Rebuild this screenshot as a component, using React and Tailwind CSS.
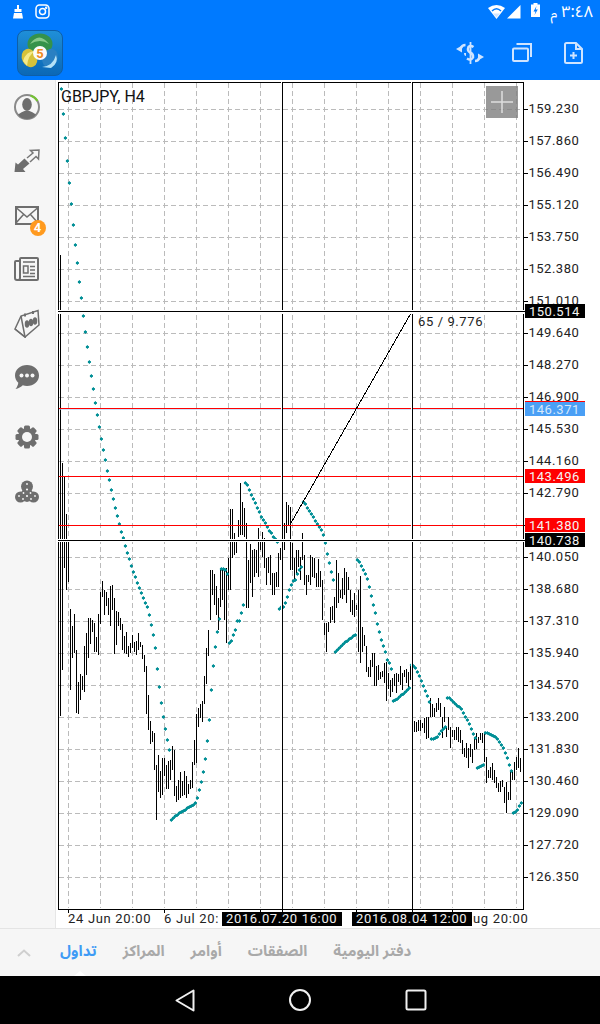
import React from 'react';

const ARABIC = "font-['Noto_Sans_Arabic','DejaVu_Sans',sans-serif]";

// [top, bottom] of each bar, first bar at x=60, one bar every 2px
const BARS = [
  [255,716],[463,670],[477,568],[514,590],[541,582],[609,690],[626,658],[614,653],[650,713],[682,714],
  [674,700],[676,690],[646,692],[633,675],[618,658],[618,644],[620,632],[623,652],[637,652],[614,655],
  [592,624],[581,597],[590,615],[592,606],[598,615],[586,626],[585,610],[598,654],[611,645],[612,626],
  [618,630],[624,650],[636,653],[632,654],[646,657],[643,653],[635,648],[642,652],[641,655],[633,650],
  [642,647],[645,659],[655,672],[666,714],[695,730],[721,744],[731,742],[733,770],[765,820],[755,792],
  [771,798],[758,795],[758,776],[765,789],[761,789],[760,780],[746,770],[750,796],[786,802],[780,800],
  [772,798],[781,796],[771,795],[776,798],[784,794],[780,789],[762,788],[740,765],[714,763],[708,727],
  [704,718],[701,722],[676,704],[648,684],[630,656],[570,620],[570,595],[574,605],[586,615],[598,630],
  [568,607],[568,600],[570,620],[568,643],[558,590],[509,590],[509,558],[533,555],[540,553],[520,537],
  [483,535],[502,535],[508,537],[523,608],[560,608],[544,583],[550,597],[549,577],[550,573],[528,577],
  [540,550],[532,557],[538,568],[558,585],[557,573],[555,585],[573,595],[573,595],[572,587],[553,587],
  [548,560],[538,550],[523,550],[502,533],[505,525],[507,570],[543,570],[558,582],[550,573],[550,567],
  [557,580],[533,560],[555,585],[575,595],[575,582],[555,585],[557,577],[558,578],[573,587],[559,587],
  [571,587],[580,620],[623,635],[623,652],[622,632],[607,623],[606,620],[597,623],[560,608],[573,603],
  [590,598],[578,599],[568,595],[572,603],[577,590],[590,612],[600,615],[593,617],[605,610],[590,652],
  [576,663],[627,652],[635,646],[646,672],[667,677],[660,677],[653,667],[653,686],[666,686],[665,680],
  [672,679],[671,677],[663,683],[662,701],[673,689],[680,697],[678,692],[674,686],[673,693],[674,682],
  [666,685],[673,690],[670,677],[669,683],[672,687],[665,680],[712,720],[721,732],[722,732],[720,731],
  [720,731],[723,728],[718,733],[717,739],[717,738],[698,717],[704,717],[708,717],[703,712],[698,710],
  [703,717],[717,738],[707,722],[727,737],[717,730],[727,748],[730,737],[730,740],[727,740],[727,742],
  [730,743],[740,754],[748,757],[743,758],[748,768],[744,757],[749,763],[737,750],[733,749],[737,743],
  [733,740],[733,743],[732,762],[757,783],[770,778],[767,778],[763,780],[770,783],[777,788],[783,792],
  [781,792],[780,787],[787,803],[782,813],[792,800],[770,800],[770,780],[762,780],[757,770],[748,768],
  [758,772],
];

// y of each indicator dot, first at x=61, one every 2px
const DOTS = [
  89,114,138,161,183,204,225,245,263,282,298,316,332,347,362,376,389,403,415,427,
  439,450,460,471,480,490,499,508,516,524,532,538,546,553,559,566,572,577,583,588,
  593,598,603,607,615,625,635,648,669,687,703,717,729,740,750,820,818,816,815,813,
  812,811,810,808,807,806,805,803,798,790,782,772,759,741,720,690,666,647,632,619,
  569,569,570,574,643,641,635,630,621,621,613,605,483,485,490,495,499,503,508,512,
  517,520,523,527,531,533,537,539,542,609,607,607,603,597,590,585,581,580,574,570,
  567,502,504,508,511,514,517,521,524,527,530,535,543,554,563,572,580,652,650,648,
  646,644,642,641,639,638,636,635,560,562,566,570,574,579,587,596,605,613,624,632,
  640,646,652,660,663,669,701,700,699,697,695,694,692,690,688,665,666,668,672,676,
  681,686,691,696,702,739,739,738,737,734,731,729,727,698,698,700,702,704,706,707,
  709,713,717,720,724,729,734,738,768,767,766,765,733,733,734,735,736,737,739,742,
  745,748,753,758,765,771,813,812,810,806,803,
];

const PRICES = ['159.230','157.860','156.490','155.120','153.750','152.380','151.010','149.640','148.270','146.900','145.530','144.160','142.790','141.420','140.050','138.680','137.310','135.940','134.570','133.200','131.830','130.460','129.090','127.720','126.350'];
const VLINES = Array.from({ length: 15 }, (_, i) => 68.5 + i * 32);
const HLINES = Array.from({ length: 26 }, (_, i) => 109.5 + i * 32);

const barsPath = BARS.map(([a, b], i) => `M${60.5 + i * 2} ${a}V${b}`).join('');
const dotsPath = DOTS.map((y, i) => {
  const x = 61.4 + i * 2;
  return `M${x - 1.5} ${y - 0.9}h3v1.8h-3zM${x - 0.6} ${y - 1.8}h1.2v3.6h-1.2z`;
}).join('');

const TAGS = [
  { y: 304, color: '#000000', text: '150.514' },
  { y: 402, color: '#4a9ff5', text: '146.371', fg: '#d8e9fb' },
  { y: 469, color: '#ff0000', text: '143.496' },
  { y: 518, color: '#ff0000', text: '141.380' },
  { y: 533, color: '#000000', text: '140.738' },
];

function Chart() {
  return (
    <svg width="544" height="848" viewBox="56 80 544 848" className="block" style={{ fontFamily: 'Roboto, sans-serif' }}>
      <rect x="56" y="80" width="544" height="848" fill="#fff" />
      <g stroke="#bbbbbb" strokeWidth="1" strokeDasharray="5 3" shapeRendering="crispEdges">
        {VLINES.map((x) => <path key={x} d={`M${x} 83V908`} />)}
        {HLINES.map((y) => <path key={y} d={`M59 ${y}H522`} />)}
      </g>
      <path d={barsPath} stroke="#000" strokeWidth="1" shapeRendering="crispEdges" fill="none" />
      <path d={dotsPath} fill="#008f96" />
      <rect x="58" y="82" width="465" height="827" fill="none" stroke="#000" strokeWidth="1" shapeRendering="crispEdges" transform="translate(0.5 0)" />
      <g fill="#ff0000">
        <rect x="59" y="408" width="464" height="1" />
        <rect x="59" y="476" width="464" height="1" />
        <rect x="59" y="525" width="464" height="1" />
        <rect x="525" y="401" width="60" height="1" />
      </g>
      <rect x="59" y="409" width="464" height="1" fill="#a9cdf5" opacity="0.6" />
      <path d="M291 523L411 313" stroke="#000" strokeWidth="1" fill="none" shapeRendering="crispEdges" />
      {/* crosshairs */}
      <rect x="281" y="82" width="1" height="827" fill="#fff" />
      <rect x="411" y="82" width="1" height="827" fill="#fff" />
      <rect x="282" y="82" width="1" height="830" fill="#000" />
      <rect x="412" y="82" width="1" height="830" fill="#000" />
      <rect x="58" y="310" width="467" height="4" fill="#fff" />
      <rect x="58" y="539" width="467" height="3" fill="#fff" />
      <rect x="58" y="311" width="467" height="1" fill="#000" />
      <rect x="58" y="540" width="467" height="1" fill="#000" />
      {/* axis ticks */}
      {PRICES.map((p, i) => <rect key={p} x="523" y={109 + i * 32} width="5" height="1" fill="#000" />)}
      {[68, 164, 260, 356, 452].map((x) => <rect key={x} x={x} y="909" width="1" height="4" fill="#000" />)}
      {PRICES.map((p, i) => (
        <text key={p} x="528.500" y={113 + i * 32} fontSize="13" fill="#222" letterSpacing="0.5">{p}</text>
      ))}
      {TAGS.map((t) => (
        <g key={t.text}>
          <rect x="525" y={t.y} width="60" height="14" fill={t.color} />
          <text x="529" y={t.y + 11.500} fontSize="13" fill={t.fg || '#f4f4f4'} letterSpacing="0.5">{t.text}</text>
        </g>
      ))}
      <text x="68" y="923" fontSize="13" fill="#222" letterSpacing="0.68">24 Jun 20:00</text>
      <text x="164" y="923" fontSize="13" fill="#222" letterSpacing="0.68">6 Jul 20:</text>
      <text x="473" y="923" fontSize="13" fill="#222" letterSpacing="0.68">ug 20:00</text>
      <rect x="222" y="912" width="120" height="14" fill="#000" />
      <rect x="352" y="912" width="120" height="14" fill="#000" />
      <text x="226" y="923" fontSize="13" fill="#f0f0f0" letterSpacing="0.65">2016.07.20 16:00</text>
      <text x="356" y="923" fontSize="13" fill="#f0f0f0" letterSpacing="0.65">2016.08.04 12:00</text>
      <text x="61" y="102" fontSize="16" fill="#111">GBPJPY, H4</text>
      <text x="418" y="326" fontSize="13" fill="#222" letterSpacing="0.6">65 / 9.776</text>
      <rect x="486" y="86" width="32" height="32" fill="#808080" opacity="0.8" />
      <path d="M502 91V113M491 102H513" stroke="#dedede" strokeWidth="1.500" />
    </svg>
  );
}

function MtLogo() {
  return (
    <div className="w-[46px] h-[46px] rounded-lg border border-[#0e5fa8] bg-gradient-to-b from-[#1f8fd8] to-[#0b68b6] overflow-hidden">
      <svg width="44" height="44" viewBox="0 0 44 44">
        <ellipse cx="22" cy="13" rx="12.500" ry="10.500" fill="#35924a" />
        <path d="M12 13Q21 0 31 13Q22 7 12 13Z" fill="#86c98a" />
        <ellipse cx="11.500" cy="27" rx="7.500" ry="9.500" fill="#d6c23a" transform="rotate(-25 11.500 27)" />
        <path d="M5 30Q8 20 17 20Q10 24 9 35Z" fill="#f4ea8a" />
        <ellipse cx="32" cy="27" rx="7.500" ry="9.500" fill="#2a80c2" transform="rotate(25 32 27)" />
        <path d="M24 36Q35 35 38 24Q41 32 33 37Z" fill="#b5e2f7" />
        <circle cx="22" cy="22" r="7" fill="#fbfbfb" />
        <text x="22" y="27" textAnchor="middle" fontSize="13" fontWeight="700" fill="#ef8a22" fontFamily="Roboto, sans-serif">5</text>
      </svg>
    </div>
  );
}

function StatusBar() {
  return (
    <div className="h-[25px] flex items-start relative text-white">
      <svg width="10" height="14" viewBox="0 0 10 14" className="ml-[13px] mt-[5px]" fill="#fff">
        <path d="M4 0h2v4h2.500v3H1.500V4H4zM1 8h8l1 5.500H0z" />
      </svg>
      <svg width="15" height="15" viewBox="0 0 15 15" className="ml-[12px] mt-[4px]" fill="none" stroke="#fff" strokeWidth="1.500">
        <rect x="1" y="1" width="13" height="13" rx="3.500" />
        <circle cx="7.500" cy="7.500" r="3" />
        <circle cx="11.200" cy="3.800" r="0.500" fill="#fff" />
      </svg>
      <div className="ml-auto h-[25px] flex items-start pr-[7px]">
        <svg width="17" height="14" viewBox="0 0 17 14" className="mt-[5px]">
          <path d="M0 3Q8.500 -3 17 3L8.500 14Z" fill="#fff" />
          <path d="M4 6Q8.500 1.500 13 6" stroke="#007aff" strokeWidth="1.500" fill="none" />
          <path d="M5 8.500h7l-3.500 4z" fill="#cfe4ff" />
        </svg>
        <svg width="14" height="14" viewBox="0 0 14 14" className="ml-[2px] mt-[5px]" fill="#fff">
          <path d="M13.500 0V13.500H0Z" />
        </svg>
        <svg width="9" height="14" viewBox="0 0 9 14" className="ml-[10px] mt-[3px]">
          <path d="M2.500 0h4v1.500H9V14H0V1.500h2.500z" fill="#fff" />
          <path d="M5.500 3L2.500 8.500H4.500L3.500 12L6.800 6.500H4.700z" fill="#007aff" />
        </svg>
        <span className={`ml-[10px] mt-[5px] text-[14px] leading-[18px] ${ARABIC}`}>م</span>
        <span className={`ml-[4px] mt-[2px] text-[16px] leading-[20px] whitespace-nowrap ${ARABIC}`}>٣:٤٨</span>
      </div>
    </div>
  );
}

function Toolbar() {
  return (
    <div className="h-[55px] flex items-center">
      <div className="ml-[17px]"><MtLogo /></div>
      <div className="ml-auto flex items-center text-[#cfe4ff]">
        <svg width="28" height="24" viewBox="0 0 28 24" fill="none" stroke="currentColor" strokeWidth="2.500">
          <path d="M17.500 6Q14.500 4 12.500 6Q11 10 14 11.500Q17.500 13 17 16.500Q15 20 11 17.500" />
          <path d="M14.500 1V23" strokeWidth="1.800" />
          <path d="M5 7Q6 4 9.500 4" />
          <path d="M0 8L6 4.500V11.500Z" fill="currentColor" stroke="none" />
          <path d="M9 12Q9 14 10 14" strokeWidth="2" />
          <path d="M23 17Q22.500 20 19 20" />
          <path d="M28 16L22 12.500V19.500Z" fill="currentColor" stroke="none" />
        </svg>
        <svg width="20" height="19" viewBox="0 0 20 19" fill="none" stroke="currentColor" strokeWidth="2" className="ml-[28px]">
          <rect x="1" y="5.500" width="15" height="12.500" rx="1" />
          <path d="M4.500 1H19V14" />
        </svg>
        <svg width="19" height="22" viewBox="0 0 19 22" fill="none" stroke="currentColor" strokeWidth="2" className="ml-[32px] mr-[17px]">
          <path d="M2.500 1H12L18 7V19.500Q18 21 16.500 21H2.500Q1 21 1 19.500V2.500Q1 1 2.500 1Z" />
          <path d="M12 1V7H18" />
          <path d="M9.500 10V17M6 13.500H13" />
        </svg>
      </div>
    </div>
  );
}

function SideSlot({ children }) {
  return <div className="h-[54px] flex items-center justify-center shrink-0 pr-[2px]">{children}</div>;
}

function Sidebar() {
  return (
    <div className="w-[56px] border-r border-[#e6e6e6] bg-[#f6f6f6] flex flex-col text-[#6e6e6e]">
      <SideSlot>
        <svg width="28" height="28" viewBox="0 0 28 28">
          <circle cx="14" cy="14" r="12" fill="none" stroke="#8a8a8a" strokeWidth="2" />
          <path d="M17.500 2.500A12 12 0 0 1 24.500 8" fill="none" stroke="#74c234" strokeWidth="2" />
          <ellipse cx="14" cy="11.500" rx="4.800" ry="6.500" fill="#6e6e6e" />
          <path d="M5 21.500Q9 18.500 11.500 18h5Q19 18.500 23 21.500Q20 26 14 26Q8 26 5 21.500Z" fill="#6e6e6e" />
        </svg>
      </SideSlot>
      <SideSlot>
        <svg width="26" height="24" viewBox="0 0 26 24" fill="none">
          <path d="M0.500 23L1.500 13.500L4 15.500L10.500 9.500L15.500 14.500L9 20L11.500 23Z" fill="#6e6e6e" />
          <path d="M13 9L19 4L16.500 1.500L25 1L24.500 10L22 7.500L16 13" stroke="#777" strokeWidth="1.500" />
        </svg>
      </SideSlot>
      <SideSlot>
        <div className="relative w-[24px] h-[19px]">
          <svg width="24" height="19" viewBox="0 0 24 19" fill="none" stroke="#6e6e6e" strokeWidth="2" className="block">
            <rect x="1" y="1" width="22" height="17" />
            <path d="M1 1.500L12 11L23 1.500M1 17L8.500 8.500M23 17L15.500 8.500" strokeWidth="1.500" />
          </svg>
          <span className="absolute left-[15px] top-[14px] w-[16px] h-[16px] rounded-full bg-[#ff9a1f] text-white text-[13px] leading-[16px] font-bold text-center font-['Roboto',sans-serif]">4</span>
        </div>
      </SideSlot>
      <SideSlot>
        <svg width="25" height="24" viewBox="0 0 25 24" fill="none" stroke="#6e6e6e">
          <path d="M6 4H2Q1 4 1 5V21Q1 23 3 23H23Q24 23 24 22V2Q24 1 23 1H7Q6 1 6 2V21Q6 23 4 23" strokeWidth="2" />
          <rect x="9.500" y="9" width="4.500" height="7" strokeWidth="1.500" />
          <path d="M9 5H21M16 9.500H21M16 13H21M16 16.500H21M9 19.500H21" strokeWidth="1.500" />
        </svg>
      </SideSlot>
      <SideSlot>
        <svg width="26" height="29" viewBox="0 0 26 29" fill="none" stroke="#6e6e6e" strokeWidth="1.500">
          <path d="M1 20L7 7L24 1.500L25 16L11 28Z" />
          <path d="M1 20L11 28L7 7" />
          <path d="M11 4.500V7.500M19 2V5" strokeWidth="2" />
          <ellipse cx="13" cy="15" rx="1.500" ry="3" fill="#6e6e6e" />
          <ellipse cx="17" cy="13.500" rx="1.500" ry="3" fill="#6e6e6e" />
          <ellipse cx="21" cy="12" rx="1.500" ry="3" fill="#6e6e6e" />
        </svg>
      </SideSlot>
      <SideSlot>
        <svg width="24" height="24" viewBox="0 0 24 24">
          <path d="M12 0C18.600 0 24 4.500 24 10.500S18.600 21 12 21C10.500 21 9 20.800 7.800 20.300C6 22 3.500 23.500 0.500 24C2 22.500 3 20 3.300 17.800C1.200 16 0 13.400 0 10.500C0 4.500 5.400 0 12 0Z" fill="#6e6e6e" />
          <circle cx="6.500" cy="10.500" r="2" fill="#f6f6f6" />
          <circle cx="12" cy="10.500" r="2" fill="#f6f6f6" />
          <circle cx="17.500" cy="10.500" r="2" fill="#f6f6f6" />
        </svg>
      </SideSlot>
      <div className="h-[6px]" />
      <SideSlot>
        <svg width="24" height="24" viewBox="0 0 24 24" fill="#6e6e6e">
          {[0, 45, 90, 135].map((a) => (
            <rect key={a} x="9" y="0.500" width="6" height="23" rx="1.500" transform={`rotate(${a} 12 12)`} />
          ))}
          <circle cx="12" cy="12" r="9" />
          <circle cx="12" cy="12" r="5" fill="#f6f6f6" />
        </svg>
      </SideSlot>
      <SideSlot>
        <svg width="24" height="23" viewBox="0 0 24 23" fill="#6e6e6e">
          <circle cx="12" cy="6.500" r="6" />
          <circle cx="5.500" cy="17" r="5.500" />
          <circle cx="18.500" cy="17" r="5.500" />
          <path d="M12 3L22 19L12 22L2 19Z" />
          <g fill="#f6f6f6">
            <circle cx="12" cy="9.500" r="1.100" />
            <circle cx="8.500" cy="13" r="0.900" />
            <circle cx="15.500" cy="13" r="0.900" />
            <circle cx="4" cy="16" r="0.900" />
            <circle cx="8" cy="19" r="0.900" />
            <circle cx="20" cy="16" r="0.900" />
            <circle cx="16" cy="19" r="0.900" />
            <circle cx="12" cy="16" r="1.100" />
            <circle cx="12" cy="4" r="0.900" />
          </g>
        </svg>
      </SideSlot>
    </div>
  );
}

function BottomTabs() {
  return (
    <div className="h-[48px] border-t border-[#e4e4e4] bg-[#f6f6f6] relative flex items-center">
      <svg width="14" height="8" viewBox="0 0 14 8" fill="none" stroke="#cfcfcf" strokeWidth="2" className="ml-[17px]">
        <path d="M1 7L7 1.500L13 7" />
      </svg>
      <div className={`ml-[29px] flex items-center gap-[26px] text-[15px] font-bold text-[#a9a9a9] leading-[24px] pb-[3px] ${ARABIC}`}>
        <span className="text-[#3f9bf5]">تداول</span>
        <span>المراكز</span>
        <span>أوامر</span>
        <span>الصفقات</span>
        <span>دفتر اليومية</span>
      </div>
      <div className="absolute left-[74px] bottom-0 w-0 h-0 border-x-[6px] border-x-transparent border-b-[5px] border-b-white" />
    </div>
  );
}

function NavBar() {
  return (
    <div className="h-[48px] bg-black flex items-center">
      <svg width="20" height="23" viewBox="0 0 20 23" fill="none" stroke="#f0f0f0" strokeWidth="2" strokeLinejoin="round" className="ml-[175px]">
        <path d="M18.500 1.500V21.500L1.500 11.500Z" />
      </svg>
      <svg width="24" height="24" viewBox="0 0 24 24" fill="none" stroke="#f0f0f0" strokeWidth="2" className="ml-[93px]">
        <circle cx="12" cy="12" r="10" />
      </svg>
      <svg width="22" height="22" viewBox="0 0 22 22" fill="none" stroke="#f0f0f0" strokeWidth="2" className="ml-[93px]">
        <rect x="1.500" y="1.500" width="19" height="19" rx="1.500" />
      </svg>
    </div>
  );
}

export default function App() {
  return (
    <div className="w-[600px] h-[1024px] flex flex-col overflow-hidden bg-white">
      <div className="h-[80px] bg-[#007aff] shrink-0">
        <StatusBar />
        <Toolbar />
      </div>
      <div className="flex h-[848px]">
        <Sidebar />
        <Chart />
      </div>
      <BottomTabs />
      <NavBar />
    </div>
  );
}
